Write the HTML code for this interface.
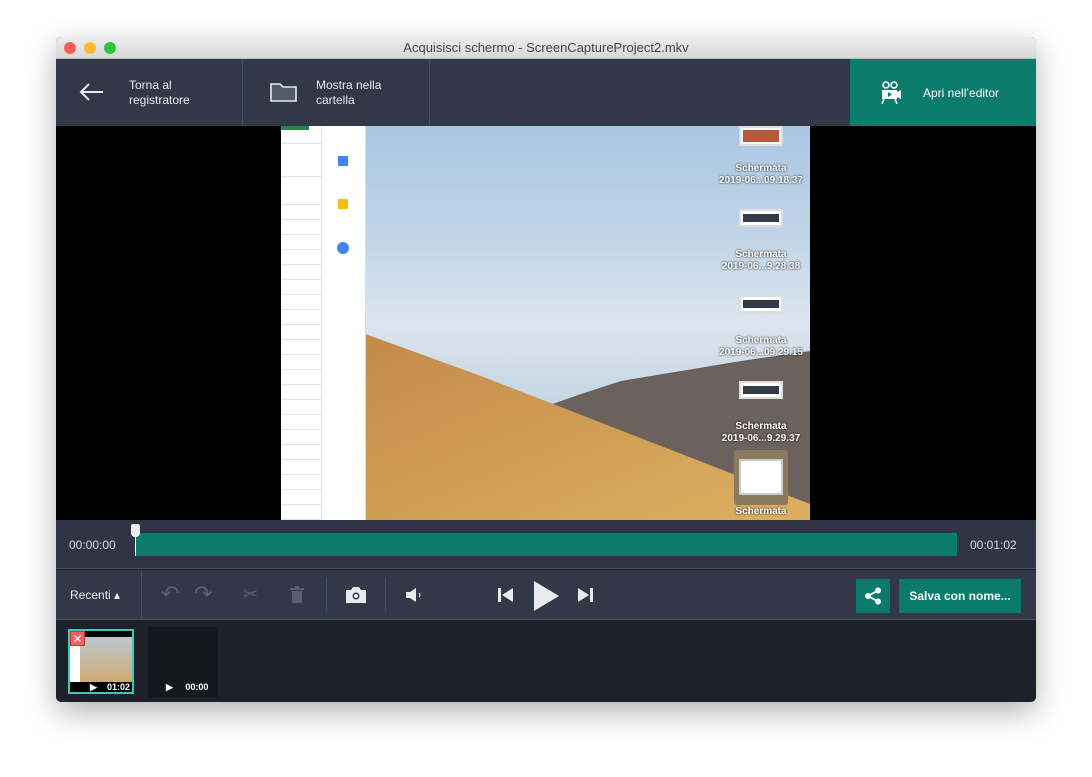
<!DOCTYPE html>
<html><head><meta charset="utf-8"><style>
*{margin:0;padding:0;box-sizing:border-box}
body{width:1092px;height:777px;background:#fff;font-family:"Liberation Sans",sans-serif;position:relative;overflow:hidden}
.win{position:absolute;left:56px;top:37px;width:980px;height:665px;border-radius:5px;overflow:hidden;box-shadow:0 10px 30px rgba(0,0,0,.3);background:#1e212a}
.title{position:absolute;left:0;top:0;width:980px;height:22px;background:linear-gradient(#ececec,#d8d8d8);text-align:center;font-size:13px;line-height:22px;color:#444;border-bottom:1px solid #bbb}
.dot{position:absolute;top:5px;width:12px;height:12px;border-radius:50%}
.hdr{position:absolute;left:0;top:22px;width:980px;height:67px;background:#323848}
.hb{position:absolute;top:0;height:67px;border-right:1px solid #454c5c;color:#e8eaee;font-size:12px;line-height:15px}
.t{position:absolute;color:#d8dbe0;font-size:12px}
.vid{position:absolute;left:0;top:89px;width:980px;height:394px;background:#000}
.tl{position:absolute;left:0;top:483px;width:980px;height:49px;background:#2f3544;border-bottom:1px solid #454c5c}
.tb{position:absolute;left:0;top:533px;width:980px;height:50px;background:#323848;border-bottom:1px solid #454c5c}
.lbl{position:absolute;color:#fff;font-size:10px;font-weight:bold;text-align:center;width:90px;line-height:12px;text-shadow:0 0 2px #000}
</style></head><body>
<div class="win">
<div class="title">Acquisisci schermo - ScreenCaptureProject2.mkv
<div class="dot" style="left:8px;background:#fc5f57"></div><div class="dot" style="left:28px;background:#fdbc2e"></div><div class="dot" style="left:48px;background:#29c840"></div></div>
<div class="hdr">
<div class="hb" style="left:0;width:187px">
<svg style="position:absolute;left:23px;top:24px" width="26" height="18"><path d="M2 9H24M10 1L2 9L10 17" stroke="#e8eaee" stroke-width="2" fill="none"/></svg>
<div style="position:absolute;left:73px;top:19px">Torna al<br>registratore</div></div>
<div class="hb" style="left:187px;width:187px">
<svg style="position:absolute;left:27px;top:22px" width="28" height="22"><path d="M1 3H10L13 6H26V20H1Z" stroke="#e8eaee" stroke-width="1.6" fill="#535a6a"/></svg>
<div style="position:absolute;left:73px;top:19px">Mostra nella<br>cartella</div></div>
<div style="position:absolute;left:794px;top:0;width:186px;height:67px;background:#0b7b6c;color:#fff;font-size:12px">
<svg style="position:absolute;left:30px;top:22px" width="24" height="24"><circle cx="6" cy="4" r="3" stroke="#fff" stroke-width="1.6" fill="none"/><circle cx="14" cy="4" r="3" stroke="#fff" stroke-width="1.6" fill="none"/><rect x="2" y="9" width="15" height="9" fill="#fff"/><path d="M17 11L21 9V18L17 16Z" fill="#fff"/><path d="M4 18L2 23M15 18L17 23" stroke="#fff" stroke-width="1.6"/><path d="M8 11L12 13.5L8 16Z" fill="#0b7b6c"/></svg>
<div style="position:absolute;left:73px;top:27px">Apri nell’editor</div></div>
</div>
<div class="vid">
<div style="position:absolute;left:225px;top:0;width:529px;height:394px;background:linear-gradient(#a9c6e2 0%,#c3d6e8 30%,#dbe5ee 50%,#c6d6e4 70%,#b8c9da 100%);overflow:hidden">
<svg style="position:absolute;left:0;top:0" width="529" height="394"><defs><linearGradient id="d" x1="0" y1="0" x2="1" y2="1"><stop offset="0" stop-color="#c38a4a"/><stop offset="1" stop-color="#dcb060"/></linearGradient></defs><path d="M260 282L300 268L340 255L400 245L460 235L529 225V394H300Z" fill="#6b625d"/><path d="M84 208L200 250L380 320L529 378V394H84Z" fill="url(#d)"/></svg>
<div style="position:absolute;left:0;top:0;width:84px;height:394px;background:#fff">
<div style="position:absolute;left:40px;top:0;width:1px;height:394px;background:#e0e0e0"></div>
<div style="position:absolute;left:0;top:17px;width:40px;height:1px;background:#e0e0e0"></div>
<div style="position:absolute;left:0;top:50px;width:40px;height:1px;background:#e0e0e0"></div>
<div style="position:absolute;left:0;top:64px;width:40px;height:330px;background:repeating-linear-gradient(#fff 0,#fff 14px,#e4e4e4 14px,#e4e4e4 15px)"></div>
<div style="position:absolute;left:0;top:0;width:28px;height:4px;background:#1e8e3e"></div>
<div style="position:absolute;left:57px;top:30px;width:10px;height:10px;background:#4285f4"></div>
<div style="position:absolute;left:57px;top:73px;width:10px;height:10px;background:#f9bc05"></div>
<div style="position:absolute;left:56px;top:116px;width:12px;height:12px;border-radius:50%;background:#4285f4"></div></div>
<div style="position:absolute;left:84px;top:0;width:1px;height:394px;background:#ddd"></div>
<div style="position:absolute;left:458px;top:0;width:44px;height:20px;background:#fff;border:2px solid #ddd"><div style="margin:2px;height:12px;background:#b85a3a"></div></div>
<div style="position:absolute;left:458px;top:83px;width:44px;height:18px;background:#fff;border:2px solid #ddd"><div style="margin:3px 2px;height:8px;background:#333a48"></div></div>
<div style="position:absolute;left:458px;top:169px;width:44px;height:18px;background:#fff;border:2px solid #ddd"><div style="margin:3px 2px;height:8px;background:#333a48"></div></div>
<div style="position:absolute;left:458px;top:255px;width:44px;height:18px;background:#fff;border:2px solid #ddd"><div style="margin:3px 2px;height:8px;background:#333a48"></div></div>
<div style="position:absolute;left:453px;top:324px;width:54px;height:55px;background:#8a7a5e;border-radius:3px"><div style="margin:9px 5px;height:36px;background:#fff;border:2px solid #ccc"></div></div>
<div class="lbl" style="left:435px;top:37px">Schermata<br>2019-06...09.18.37</div>
<div class="lbl" style="left:435px;top:123px">Schermata<br>2019-06...9.28.38</div>
<div class="lbl" style="left:435px;top:209px">Schermata<br>2019-06...09.29.15</div>
<div class="lbl" style="left:435px;top:295px">Schermata<br>2019-06...9.29.37</div>
<div class="lbl" style="left:435px;top:380px">Schermata</div>
</div></div>
<div class="tl">
<div class="t" style="left:13px;top:18px">00:00:00</div>
<div style="position:absolute;left:79px;top:13px;width:822px;height:23px;background:#0b7b6c"></div>
<div style="position:absolute;left:79px;top:8px;width:1px;height:28px;background:#fff"></div>
<div style="position:absolute;left:75px;top:4px;width:9px;height:13px;background:#eee;border-radius:2px 2px 4px 4px"></div>
<div class="t" style="left:914px;top:18px">00:01:02</div></div>
<div class="tb">
<div class="t" style="left:14px;top:18px;color:#e8eaee">Recenti ▴</div>
<div style="position:absolute;left:85px;top:0;width:1px;height:50px;background:#454c5c"></div>
<div class="t" style="left:105px;top:11px;font-size:22px;color:#5a6070">↶</div>
<div class="t" style="left:138px;top:11px;font-size:22px;color:#5a6070">↷</div>
<div class="t" style="left:187px;top:14px;font-size:18px;color:#5a6070">✂</div>
<svg style="position:absolute;left:234px;top:16px" width="14" height="18"><rect x="0" y="2" width="14" height="2" fill="#5a6070"/><rect x="5" y="0" width="4" height="2" fill="#5a6070"/><path d="M2 5H12V17H2Z" fill="#5a6070"/></svg>
<div style="position:absolute;left:270px;top:8px;width:1px;height:34px;background:#454c5c"></div>
<svg style="position:absolute;left:290px;top:17px" width="20" height="16"><path d="M0 3H5L7 0H13L15 3H20V16H0Z" fill="#e8eaee"/><circle cx="10" cy="9" r="3.5" fill="#323848"/><circle cx="10" cy="9" r="2" fill="#e8eaee"/></svg>
<div style="position:absolute;left:329px;top:8px;width:1px;height:34px;background:#454c5c"></div>
<svg style="position:absolute;left:350px;top:17px" width="20" height="16"><path d="M0 5H4L10 1V15L4 11H0Z" fill="#e8eaee"/><path d="M13 6Q15 8 13 10" stroke="#e8eaee" fill="none"/></svg>
<svg style="position:absolute;left:442px;top:17px" width="16" height="16"><rect x="0" y="1" width="3" height="14" fill="#e8eaee"/><path d="M15 1V15L4 8Z" fill="#e8eaee"/></svg>
<svg style="position:absolute;left:478px;top:11px" width="26" height="30"><path d="M0 0L25 15L0 30Z" fill="#e8eaee"/></svg>
<svg style="position:absolute;left:522px;top:17px" width="16" height="16"><path d="M0 1L11 8L0 15Z" fill="#e8eaee"/><rect x="12" y="1" width="3" height="14" fill="#e8eaee"/></svg>
<div style="position:absolute;left:800px;top:9px;width:34px;height:34px;background:#0b7b6c"><svg style="position:absolute;left:8px;top:8px" width="18" height="18"><circle cx="14" cy="3.5" r="3" fill="#fff"/><circle cx="4" cy="9" r="3" fill="#fff"/><circle cx="14" cy="14.5" r="3" fill="#fff"/><path d="M14 3.5L4 9L14 14.5" stroke="#fff" stroke-width="1.8" fill="none"/></svg></div>
<div style="position:absolute;left:843px;top:9px;width:122px;height:34px;background:#0b7b6c;color:#fff;font-size:12px;font-weight:bold;text-align:center;line-height:34px">Salva con nome...</div>
</div>
<div style="position:absolute;left:12px;top:592px;width:66px;height:65px;border:2px solid #3cc8bc;background:linear-gradient(#b7cde0,#d3a35a);overflow:hidden">
<div style="position:absolute;left:0;top:0;width:62px;height:6px;background:#000"></div>
<div style="position:absolute;left:0;top:6px;width:10px;height:50px;background:#fff"></div>
<div style="position:absolute;left:0;top:51px;width:62px;height:10px;background:#000;color:#fff;font-size:9px;font-weight:bold;text-align:right;padding-right:2px;line-height:10px">▶&nbsp;&nbsp;&nbsp;&nbsp;01:02</div>
<div style="position:absolute;left:0;top:0;width:15px;height:15px;background:#e86464;color:#fff;font-size:12px;text-align:center;line-height:14px;border:1px solid #c33">✕</div></div>
<div style="position:absolute;left:92px;top:590px;width:70px;height:70px;background:#15171e;color:#fff;font-size:9px;font-weight:bold"><div style="position:absolute;left:18px;top:55px">▶&nbsp;&nbsp;&nbsp;&nbsp;&nbsp;00:00</div></div>
</div>
</body></html>
